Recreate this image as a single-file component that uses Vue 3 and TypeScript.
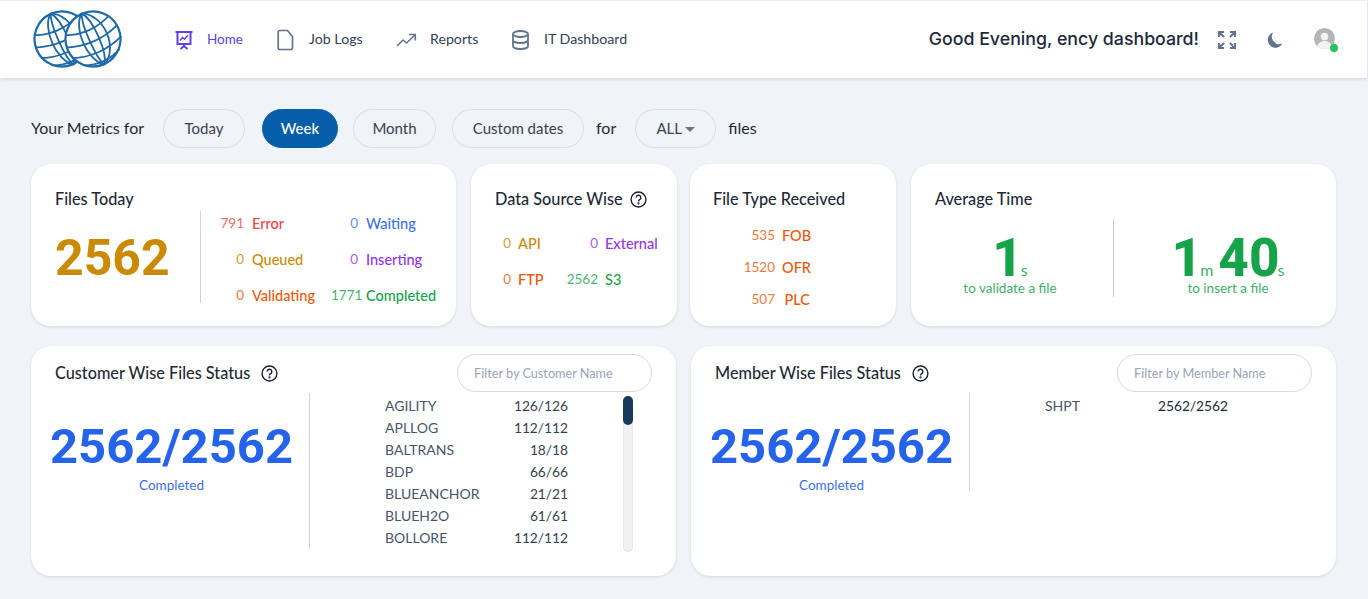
<script setup lang="ts">
interface Stat { n: string; label: string; color: string }
const pills = [
  { label: 'Today', width: 82 }, { label: 'Week', width: 76 },
  { label: 'Month', width: 83 }, { label: 'Custom dates', width: 132 },
]
const red = '#ef4444', blue = '#3b6ff0', amber = '#ca8a04', purple = '#9333ea', orange = '#ea580c', green = '#16a34a'
const todayStats: Stat[] = [
  { n: '791', label: 'Error', color: red }, { n: '0', label: 'Waiting', color: blue },
  { n: '0', label: 'Queued', color: amber }, { n: '0', label: 'Inserting', color: purple },
  { n: '0', label: 'Validating', color: orange }, { n: '1771', label: 'Completed', color: green },
]
const sourceStats: Stat[] = [
  { n: '0', label: 'API', color: amber }, { n: '0', label: 'External', color: purple },
  { n: '0', label: 'FTP', color: orange }, { n: '2562', label: 'S3', color: green },
]
const types = [{ n: '535', label: 'FOB' }, { n: '1520', label: 'OFR' }, { n: '507', label: 'PLC' }]
const customers = [
  ['AGILITY', '126/126'], ['APLLOG', '112/112'], ['BALTRANS', '18/18'], ['BDP', '66/66'],
  ['BLUEANCHOR', '21/21'], ['BLUEH2O', '61/61'], ['BOLLORE', '112/112'],
]
const merid = ['M0-28C-14-18-14 18 0 28', 'M0-28C-5-18-5 18 0 28', 'M0-28C8-18 8 18 0 28', 'M0-28C20-18 20 18 0 28']
const para = ['M-24-15C-10-8 10-8 24-15', 'M-28-3C-10 4 10 4 28-3', 'M-27 9C-10 16 10 16 27 9', 'M-20 20C-8 26 8 26 20 20']
</script>

<template>
  <div class="page">
    <header class="top">
      <svg class="logo" width="90" height="58" viewBox="0 0 90 58" fill="none" stroke="#1f69a6" stroke-width="1.8">
        <g v-for="x in [29, 60]" :key="x" :transform="`translate(${x} 29) rotate(-24)`">
          <circle cx="0" cy="0" r="27.5" stroke-width="2.2" fill="#fff" />
          <path v-for="d in merid" :key="d" :d="d" />
          <path v-for="d in para" :key="d" :d="d" />
        </g>
      </svg>
      <nav class="nav">
        <a class="nav-item active">
          <svg width="20" height="20" viewBox="0 0 20 20" fill="none" stroke="#5b43e8" stroke-width="2"><path d="M1.500 2h17M3.500 2.500v11.500h13V2.500M10 14v2M6.500 19l3.500-3 3.500 3"/><path d="M6 10.500l2.500-3 2 1.800 3.500-4" stroke-width="1.500"/></svg>
          <span>Home</span>
        </a>
        <a class="nav-item jobs">
          <svg width="18" height="22" viewBox="0 0 18 22" fill="none" stroke="#64748b" stroke-width="1.700"><path d="M3 1.500h7.500l5 6v11.200a1.800 1.800 0 0 1-1.800 1.800H3a1.800 1.800 0 0 1-1.800-1.800V3.300A1.800 1.800 0 0 1 3 1.500z"/></svg>
          <span>Job Logs</span>
        </a>
        <a class="nav-item reports">
          <svg width="21" height="14" viewBox="0 0 21 14" fill="none" stroke="#64748b" stroke-width="1.600"><path d="M1 13l6-6 3.500 3L19 2"/><path d="M13 1.500h6.300v6"/></svg>
          <span>Reports</span>
        </a>
        <a class="nav-item it">
          <svg width="19" height="20" viewBox="0 0 19 20" fill="none" stroke="#64748b" stroke-width="1.800"><ellipse cx="9.500" cy="4" rx="7.500" ry="3"/><path d="M2 4v12c0 1.700 3.400 3 7.500 3s7.500-1.300 7.500-3V4M2 10c0 1.700 3.400 3 7.500 3s7.500-1.300 7.500-3"/></svg>
          <span>IT Dashboard</span>
        </a>
      </nav>
      <div class="greet">Good Evening, ency dashboard!</div>
      <svg class="expand" width="18" height="18" viewBox="0 0 18 18" fill="none" stroke="#64748b" stroke-width="2.200"><path d="M1 6V1h5M1 1l5 5M12 1h5v5M17 1l-5 5M1 12v5h5M1 17l5-5M12 17h5v-5M17 17l-5-5"/></svg>
      <svg class="moon" width="16" height="16" viewBox="0 0 16 16" fill="#64748b"><path d="M6.200.5A7.800 7.800 0 1 0 15.500 11.500 7.500 7.500 0 0 1 6.200.5z"/></svg>
      <div class="avatar">
        <svg width="21" height="21" viewBox="0 0 22 22"><circle cx="11" cy="11" r="11" fill="#b5b5b5"/><circle cx="11" cy="9" r="4" fill="#f2f2f2"/><path d="M3.500 19c1-4 4-5.500 7.500-5.500s6.500 1.500 7.500 5.500a11 11 0 0 1-15 0z" fill="#f2f2f2"/></svg>
        <i class="dot"></i>
      </div>
    </header>

    <main class="main">
      <div class="filters">
        <span class="lead">Your Metrics for</span>
        <button v-for="p in pills" :key="p.label" class="pill" :class="{ on: p.label === 'Week' }" :style="{ width: p.width + 'px' }">{{ p.label }}</button>
        <span class="word for">for</span>
        <button class="pill all">ALL<i class="caret"></i></button>
        <span class="word">files</span>
      </div>

      <section class="row-a">
        <article class="card today">
          <h3>Files Today</h3>
          <div class="today-body">
            <div class="big amber">2562</div>
            <div class="stats s1">
              <template v-for="s in todayStats" :key="s.label">
                <span class="num" :style="{ color: s.color }">{{ s.n }}</span>
                <span class="lab" :style="{ color: s.color }">{{ s.label }}</span>
              </template>
            </div>
          </div>
        </article>

        <article class="card source">
          <h3>Data Source Wise
            <svg class="help" width="17" height="17" viewBox="0 0 16 16" fill="none" stroke="#1a2230" stroke-width="1.300"><circle cx="8" cy="8" r="7"/><path d="M5.800 6.200a2.200 2.200 0 1 1 3.300 1.900c-.8.500-1.100.9-1.100 1.700"/><circle cx="8" cy="11.700" r=".4"/></svg>
          </h3>
          <div class="stats s2">
            <template v-for="s in sourceStats" :key="s.label">
              <span class="num" :style="{ color: s.color }">{{ s.n }}</span>
              <span class="lab" :style="{ color: s.color }">{{ s.label }}</span>
            </template>
          </div>
        </article>

        <article class="card type">
          <h3>File Type Received</h3>
          <div class="stats s3">
            <template v-for="t in types" :key="t.label">
              <span class="num orange">{{ t.n }}</span>
              <span class="lab orange">{{ t.label }}</span>
            </template>
          </div>
        </article>

        <article class="card avg">
          <h3>Average Time</h3>
          <div class="avg-body">
            <div class="avg-col first">
              <div class="time"><b>1</b><small>s</small></div>
              <div class="cap">to validate a file</div>
            </div>
            <div class="avg-col second">
              <div class="time"><b>1</b><small>m</small><b class="gap">40</b><small>s</small></div>
              <div class="cap">to insert a file</div>
            </div>
          </div>
        </article>
      </section>

      <section class="row-b">
        <article class="card wide">
          <div class="wide-head">
            <h3>Customer Wise Files Status
              <svg class="help h2" width="17" height="17" viewBox="0 0 16 16" fill="none" stroke="#1a2230" stroke-width="1.300"><circle cx="8" cy="8" r="7"/><path d="M5.800 6.200a2.200 2.200 0 1 1 3.300 1.900c-.8.500-1.100.9-1.100 1.700"/><circle cx="8" cy="11.700" r=".4"/></svg>
            </h3>
            <input class="search" placeholder="Filter by Customer Name" />
          </div>
          <div class="wide-body">
            <div class="total">
              <div class="big blue">2562/2562</div>
              <div class="done">Completed</div>
            </div>
            <div class="list-wrap tall">
              <div class="list">
                <div v-for="c in customers" :key="c[0]" class="li"><span>{{ c[0] }}</span><span class="val">{{ c[1] }}</span></div>
              </div>
              <div class="track"><div class="thumb"></div></div>
            </div>
          </div>
        </article>

        <article class="card wide">
          <div class="wide-head">
            <h3>Member Wise Files Status
              <svg class="help h2" width="17" height="17" viewBox="0 0 16 16" fill="none" stroke="#1a2230" stroke-width="1.300"><circle cx="8" cy="8" r="7"/><path d="M5.800 6.200a2.200 2.200 0 1 1 3.300 1.900c-.8.500-1.100.9-1.100 1.700"/><circle cx="8" cy="11.700" r=".4"/></svg>
            </h3>
            <input class="search" placeholder="Filter by Member Name" />
          </div>
          <div class="wide-body">
            <div class="total">
              <div class="big blue">2562/2562</div>
              <div class="done">Completed</div>
            </div>
            <div class="list-wrap">
              <div class="list">
                <div class="li"><span>SHPT</span><span class="val dark">2562/2562</span></div>
              </div>
            </div>
          </div>
        </article>
      </section>
    </main>
  </div>
</template>

<style>
html, body { margin: 0; background: #f0f3f8; overflow: hidden; }
</style>

<style scoped>
.page { width: 1368px; height: 599px; background: #f0f3f8; font-family: Lato, "Open Sans", sans-serif; color: #1f2937; overflow: hidden; }
.top { display: flex; align-items: center; height: 77px; margin: 1px 1px 0 0; background: #fff; box-shadow: 0 1px 3px rgba(30,41,59,.16); padding-left: 33px; }
.logo { flex: none; margin-top: -1px; }
.nav { display: flex; align-items: center; margin-left: 51px; }
.nav-item { display: flex; align-items: center; font-size: 14.200px; color: #334155; }
.nav-item span { white-space: nowrap; padding-bottom: 2px; }
.nav-item.active { color: #5b43e8; width: 103px; font-size: 13.500px; }
.nav-item.active svg { margin-right: 13px; }
.nav-item.jobs { width: 119px; }
.nav-item.jobs svg { margin-right: 14px; }
.nav-item.reports { width: 115px; }
.nav-item.reports svg { margin-right: 13px; }
.nav-item.it svg { margin-right: 14px; }
.greet { margin-left: auto; font-family: Inter, sans-serif; font-weight: 500; font-size: 17.750px; color: #1e293b; white-space: nowrap; padding-bottom: 2px; }
.expand { margin-left: 19px; }
.moon { margin-left: 31px; }
.avatar { position: relative; margin: 0 32px 0 31px; width: 21px; height: 21px; margin-top: -2px; }
.avatar svg { display: block; }
.dot { position: absolute; right: -3px; bottom: -3px; width: 8px; height: 8px; border-radius: 50%; background: #22c55e; }

.main { padding: 0 32px 0 31px; }
.filters { display: flex; align-items: center; height: 39px; margin-top: 31px; }
.lead { font-size: 16px; width: 132px; padding-bottom: 2px; white-space: nowrap; }
.word { font-size: 16px; padding-bottom: 2px; }
.for { margin-left: -4px; }
.pill { height: 39px; box-sizing: border-box; padding: 0 0 2px; border: 1px solid #d9dee6; border-radius: 20px; background: transparent; font: inherit; font-size: 15px; color: #374151; margin-right: 16px; white-space: nowrap; }
.pill.on { background: #075ea8; border-color: #075ea8; color: #fff; font-weight: 500; margin-left: 1px; margin-right: 15px; }
.pill.all { margin: 0 12px 0 19px; width: 81px; }
.caret { display: inline-block; margin-left: 3px; vertical-align: 2px; border: 5px solid transparent; border-top-color: #64748b; border-bottom: 0; }

.row-a { display: flex; margin-top: 16px; }
.row-b { display: grid; grid-template-columns: 645px 645px; column-gap: 15px; margin-top: 20px; }
.card { background: #fff; border-radius: 20px; box-shadow: 0 1px 3px rgba(30,41,59,.13); box-sizing: border-box; }
h3 { margin: 0; font-size: 16.250px; font-weight: 500; color: #1f2937; line-height: 22px; display: flex; align-items: center; white-space: nowrap; }
.help { margin-left: 7px; }
.h2 { margin-left: 11px; }

.row-a .card { flex: none; height: 162px; padding: 24px; }
.today { width: 425px; }
.source { width: 206px; margin-left: 15px; }
.type { width: 206px; margin-left: 13px; padding-left: 23px !important; }
.avg { width: 425px; margin-left: 15px; padding-right: 0 !important; }
.today-body { display: flex; margin-top: 1px; }
.big { font-family: Roboto, sans-serif; font-weight: 700; line-height: 56px; white-space: nowrap; }
.amber { color: #ca8a04; }
.today .big { flex: none; width: 146px; font-size: 50px; padding-top: 19px; box-sizing: border-box; height: 92px; border-right: 1px solid #d1d5db; }
.stats { display: grid; font-size: 14.500px; align-items: center; white-space: nowrap; }
.num { text-align: right; opacity: .8; font-size: 13.500px; }
.lab { font-weight: 500; }
.s1 { grid-template-columns: 43px 71px 27px auto; column-gap: 8px; grid-auto-rows: 36px; margin-top: -6px; }
.s2 { grid-template-columns: 16px 40px 33px auto; column-gap: 7px; grid-auto-rows: 36px; margin-top: 15px; }
.s3 { grid-template-columns: 40px 28px; column-gap: 7px; grid-auto-rows: 32px; justify-content: start; margin: 9px 0 0 22px; }
.s3 .lab { text-align: right; }
.orange { color: #ea580c; }

.avg-body { display: grid; grid-template-columns: 179px 1fr; margin-top: 9px; }
.avg-col { box-sizing: border-box; text-align: center; height: 78px; color: #16a34a; }
.avg-col.first { border-right: 1px solid #c7ccd3; padding-right: 28px; }
.avg-col.second { padding-left: 6px; }
.time { font-size: 16px; line-height: 44px; height: 44px; padding-top: 17px; white-space: nowrap; }
.time b { font-family: Roboto, sans-serif; font-weight: 800; font-size: 53px; line-height: 44px; }
.time small { font-size: 16px; line-height: 44px; margin-left: -2px; opacity: .85; }
.gap { margin-left: 5px; }
.cap { font-size: 13.500px; line-height: 16px; opacity: .85; }

.wide { height: 230px; padding: 8px 24px 0; }
.wide-head { display: flex; align-items: center; justify-content: space-between; height: 38px; }
.search { width: 195px; height: 38px; box-sizing: border-box; border: 1px solid #d4dbe6; border-radius: 19px; padding: 0 16px; font: inherit; font-size: 12.700px; background: #fff; outline: none; }
.search::placeholder { color: #9aa5b8; opacity: 1; }
.wide-body { display: flex; margin-top: 1px; }
.total { flex: none; width: 255px; box-sizing: border-box; border-right: 1px solid #d1d5db; text-align: center; padding: 26px 21px 0 0; height: 98px; }
.big.blue { color: #2563eb; font-size: 49px; margin: 0 -8px; }
.done { color: #3b6ff0; font-size: 13.500px; line-height: 20px; }
.list-wrap { position: relative; flex: 1; padding: 2px 0 0 75px; }
.tall { height: 156px; box-sizing: border-box; }
.tall::before { content: ""; position: absolute; left: -1px; top: 0; bottom: 0; width: 1px; background: #d1d5db; }
.list { width: 183px; }
.li { display: flex; justify-content: space-between; height: 22px; line-height: 22px; font-size: 14px; color: #475569; }
.val { color: #334155; font-size: 13.750px; }
.val.dark { color: #1f2937; }
.track { position: absolute; left: 313px; top: 3px; width: 10px; height: 156px; border-radius: 5px; background: #f0f1f3; box-shadow: inset 0 0 2px rgba(0,0,0,.12); }
.thumb { width: 10px; height: 29px; border-radius: 5px; background: #1a3a5c; }
</style>
